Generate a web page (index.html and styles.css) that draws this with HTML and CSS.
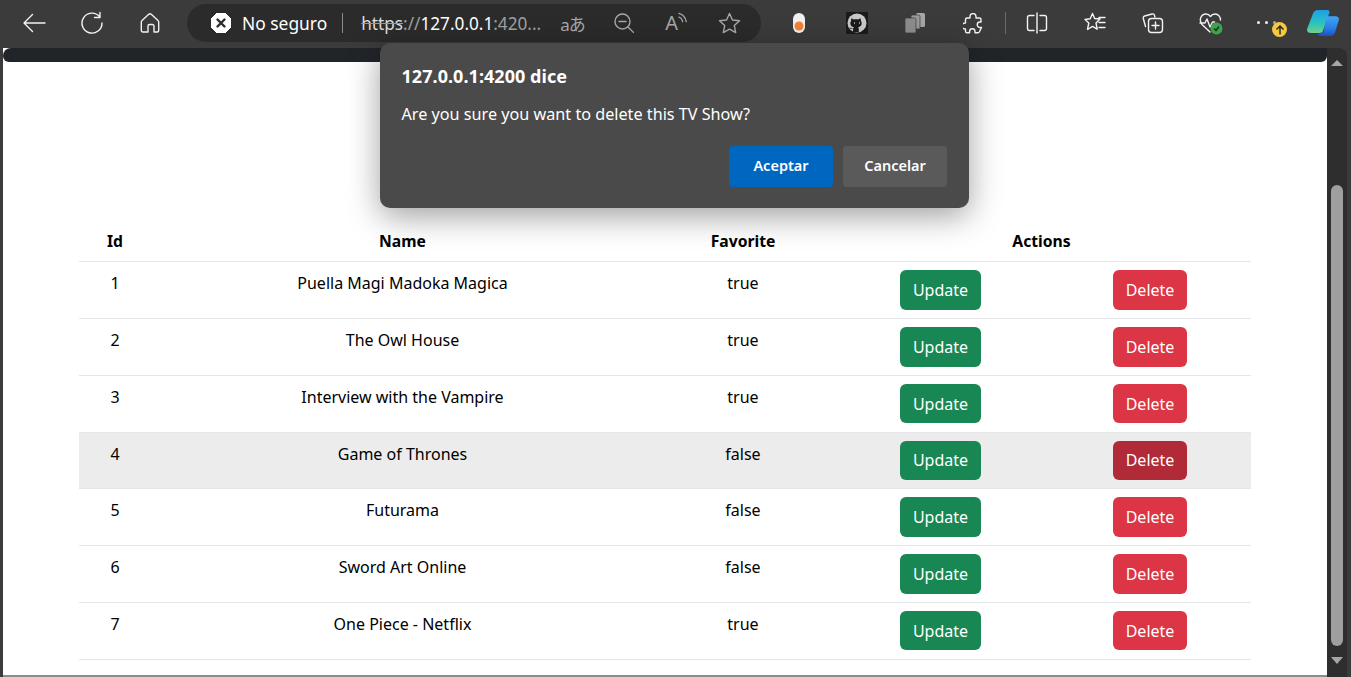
FILE: index.html
```html
<!DOCTYPE html>
<html>
  <head>
    <meta charset="utf-8" />
    <title>TV Shows</title>
    <link rel="stylesheet" href="styles.css">
  </head>
  <body>
    <div class="browser">
      <div class="toolbar">
        <div class="nav-icons">
          <span class="slot">
            <svg width="24" height="20" viewBox="0 0 24 20" class="ico"><path d="M23 10H2M10.500 1.500 2 10l8.500 8.500"/></svg>
          </span>
          <span class="slot">
            <svg width="24" height="24" viewBox="0 0 24 24" class="ico"><path d="M19.500 5.500A10 10 0 1 0 22 12M20 1.500v5h-5.500"/></svg>
          </span>
          <span class="slot">
            <svg width="22" height="22" viewBox="0 0 22 22" class="ico"><path d="M3 8.500 9.500 2.500a2.200 2.200 0 0 1 3 0L19 8.500a2 2 0 0 1 .7 1.500v8.500a1.500 1.500 0 0 1-1.500 1.500h-3.200v-6a1.500 1.500 0 0 0-1.500-1.500h-3a1.500 1.500 0 0 0-1.500 1.500v6H3.800a1.500 1.500 0 0 1-1.500-1.500V10A2 2 0 0 1 3 8.500z"/></svg>
          </span>
        </div>

        <div class="address">
          <svg width="20" height="20" viewBox="0 0 20 20" class="shield">
            <path d="M6 0h8l6 6v8l-6 6H6l-6-6V6z" fill="#fff" stroke="#fff" stroke-linejoin="round"/>
            <path d="M6.500 6.500l7 7M13.500 6.500l-7 7" stroke="#2b2b2b" stroke-width="2.400" stroke-linecap="round"/>
          </svg>
          <span class="no-secure">No seguro</span>
          <span class="addr-sep"></span>
          <span class="url"><s>https</s><span class="dim">://</span>127.0.0.1<span class="dim">:420...</span></span>
          <span class="addr-tools">
            <span class="translate">aあ</span>
            <svg width="20" height="20" viewBox="0 0 20 20" class="ico dimmed"><circle cx="8.500" cy="8.500" r="7.500"/><path d="M5 8.500h7M14 14l5.500 5.500"/></svg>
            <span class="read-aloud">A<svg width="10" height="12" viewBox="0 0 10 12" class="ico dimmed"><path d="M1 1c4 1 7 4 8 9M1 5c2 .5 3.500 2 4 5"/></svg></span>
            <svg width="23" height="22" viewBox="0 0 23 22" class="ico dimmed"><path d="M11.500 1.500l3 6.500 7 .8-5.200 4.800 1.400 7-6.200-3.500-6.200 3.500 1.400-7L1.500 8.800l7-.8z"/></svg>
          </span>
        </div>

        <div class="ext-icons">
          <span class="slot">
            <svg width="14" height="20" viewBox="0 0 14 20"><rect x="1" y="0" width="12" height="20" rx="6" fill="#f1f1f1"/><circle cx="7" cy="13" r="4.500" fill="#f58233"/></svg>
          </span>
          <span class="slot">
            <svg width="22" height="22" viewBox="0 0 22 22">
              <rect width="22" height="22" fill="#1b1b1b"/>
              <circle cx="11" cy="11" r="9.500" fill="#c9c9c9"/>
              <path d="M7 20v-3c-2 .4-3-.4-3.600-1.800 1 .4 1.800 1 2.600 1.400.5.300 1 .2 1.300-.1.100-.5.300-.9.600-1.200-2.200-.4-3.600-1.500-3.600-4 0-1 .3-1.800.9-2.400-.2-.6-.2-1.500.1-2.300.9 0 1.800.5 2.500 1 .8-.2 1.500-.3 2.200-.3s1.400.1 2.200.3c.7-.5 1.600-1 2.500-1 .3.800.3 1.700.1 2.300.6.600.9 1.400.9 2.400 0 2.500-1.400 3.600-3.600 4 .4.400.7 1 .7 1.800V20z" fill="#1b1b1b"/>
              <path d="M9 10l-1 1 1 1M13 10l1 1-1 1" fill="none" stroke="#c9c9c9" stroke-width=".7"/>
            </svg>
          </span>
          <span class="slot">
            <svg width="20" height="20" viewBox="0 0 20 20" fill="#8c8c8c">
              <rect x="11" y="0" width="9" height="14" rx="1.500" fill="#a6a6a6"/>
              <rect x="6" y="2" width="9" height="14" rx="1.500" fill="#9a9a9a" stroke="#3b3b3b" stroke-width=".7"/>
              <rect x="0" y="5" width="11" height="15" rx="1.500" stroke="#3b3b3b" stroke-width=".7"/>
            </svg>
          </span>
          <span class="slot">
            <svg width="20" height="21" viewBox="0 0 20 21" class="ico"><path d="M7 3.500a3 3 0 0 1 6 0V5h3.500a1.500 1.500 0 0 1 1.500 1.500V9h-1a2.700 2.700 0 0 0 0 5.500h1.500l-2.200 4.500a1.500 1.500 0 0 1-1.300.8H12v-1.300a2.700 2.700 0 0 0-5.400 0v1.300H4a1.500 1.500 0 0 1-1.500-1.500V16H2a3 3 0 0 1 0-6h.5V6.500A1.500 1.500 0 0 1 4 5h3z"/></svg>
          </span>
          <span class="tool-sep"></span>
          <span class="slot">
            <svg width="22" height="22" viewBox="0 0 22 22" class="ico"><path d="M8 3.500H3.500a2 2 0 0 0-2 2v11a2 2 0 0 0 2 2H8M14 3.500h4.500a2 2 0 0 1 2 2v11a2 2 0 0 1-2 2H14M11 1v20"/></svg>
          </span>
          <span class="slot">
            <svg width="22" height="22" viewBox="0 0 22 22" class="ico"><path d="M8.500 1.500l2.200 5h-.2L16 7l-4 4 1.200 6.200-4.700-2.800-5 3.100L4.800 11 1 7.500l5.200-.8zM15 5.500h6M15 10.500h6M15 15.500h6"/></svg>
          </span>
          <span class="slot">
            <svg width="22" height="22" viewBox="0 0 22 22" class="ico"><path d="M3.500 14.500 1.300 6.500A2 2 0 0 1 2.700 4L10 2a2 2 0 0 1 2.500 1.400l.4 1.600"/><rect x="6.500" y="6.500" width="14" height="14" rx="3"/><path d="M13.500 10v7M10 13.500h7"/></svg>
          </span>
          <span class="slot">
            <svg width="24" height="24" viewBox="0 0 24 24">
              <path class="ico-line" d="M11 21 3 13.500C-.5 9 2 3 7 3c2 0 3.500 1 4.500 2.500C12.500 4 14 3 16 3c3.500 0 5.500 3 5.500 6"/>
              <path class="ico-line" d="M1 12h5l2-4 3 8 2.500-5h2"/>
              <circle cx="17.500" cy="17.500" r="6" fill="#3fa34d"/>
              <path d="M15 17.500l2 2 3-4" fill="none" stroke="#16391c" stroke-width="1.500"/>
            </svg>
          </span>
          <span class="slot">
            <span class="dots"><i></i><i></i><i class="faint"></i></span>
            <span class="update-badge">
              <svg width="10" height="10" viewBox="0 0 10 10"><path d="M5 9.500V1M1.500 4.500 5 1l3.500 3.500" fill="none" stroke="#2b2b2b" stroke-width="1.500"/></svg>
            </span>
          </span>
          <span class="copilot">
            <svg width="33" height="28" viewBox="0 0 33 31" preserveAspectRatio="none">
              <defs>
                <linearGradient id="copA" x1="0" y1="0" x2="0" y2="1"><stop offset="0" stop-color="#1f9ee8"/><stop offset=".55" stop-color="#27c2c0"/><stop offset="1" stop-color="#6fd08a"/></linearGradient>
                <linearGradient id="copB" x1="0" y1="0" x2="0" y2="1"><stop offset="0" stop-color="#3fa6f5"/><stop offset=".6" stop-color="#2a7fe8"/><stop offset="1" stop-color="#1b4fc4"/></linearGradient>
              </defs>
              <path d="M11 1h9c2 0 3 1.500 2.500 3L16 24c-.5 1.500-2 2.500-3.500 2.500H4c-3 0-4.500-2-3.800-4.500L6 5c.8-2.500 2.500-4 5-4z" fill="url(#copA)"/>
              <path d="M20 8h8c3 0 4.500 2 3.800 4.500L28 26c-.8 2.500-2.500 4-5 4H13c-1.500 0-2.500-1-2-2.500 3 0 5-1 6-4l2-13c.2-1.500.5-2.500 1-2.500z" fill="url(#copB)"/>
            </svg>
          </span>
        </div>
      </div>

      <div class="viewport">
        <div class="page">
          <div class="navbar"></div>
          <div class="content">
            <table class="shows">
              <colgroup>
                <col class="col-id">
                <col class="col-name">
                <col class="col-fav">
                <col class="col-update">
                <col>
              </colgroup>
              <thead>
                <tr>
                  <th>Id</th>
                  <th>Name</th>
                  <th>Favorite</th>
                  <th colspan="2">Actions</th>
                </tr>
              </thead>
              <tbody>
                <tr>
                  <td>1</td><td>Puella Magi Madoka Magica</td><td>true</td>
                  <td><button class="btn green">Update</button></td>
                  <td><button class="btn red">Delete</button></td>
                </tr>
                <tr>
                  <td>2</td><td>The Owl House</td><td>true</td>
                  <td><button class="btn green">Update</button></td>
                  <td><button class="btn red">Delete</button></td>
                </tr>
                <tr>
                  <td>3</td><td>Interview with the Vampire</td><td>true</td>
                  <td><button class="btn green">Update</button></td>
                  <td><button class="btn red">Delete</button></td>
                </tr>
                <tr class="hovered">
                  <td>4</td><td>Game of Thrones</td><td>false</td>
                  <td><button class="btn green">Update</button></td>
                  <td><button class="btn red active">Delete</button></td>
                </tr>
                <tr>
                  <td>5</td><td>Futurama</td><td>false</td>
                  <td><button class="btn green">Update</button></td>
                  <td><button class="btn red">Delete</button></td>
                </tr>
                <tr>
                  <td>6</td><td>Sword Art Online</td><td>false</td>
                  <td><button class="btn green">Update</button></td>
                  <td><button class="btn red">Delete</button></td>
                </tr>
                <tr>
                  <td>7</td><td>One Piece - Netflix</td><td>true</td>
                  <td><button class="btn green">Update</button></td>
                  <td><button class="btn red">Delete</button></td>
                </tr>
              </tbody>
            </table>
          </div>
        </div>
        <div class="scrollbar">
          <span class="arrow up"></span>
          <span class="thumb"></span>
          <span class="arrow down"></span>
        </div>
      </div>

      <div class="dialog">
        <div class="dialog-title">127.0.0.1:4200 dice</div>
        <div class="dialog-msg">Are you sure you want to delete this TV Show?</div>
        <div class="dialog-btns">
          <button class="dlg-btn primary">Aceptar</button>
          <button class="dlg-btn">Cancelar</button>
        </div>
      </div>
    </div>
  </body>
</html>
```

FILE: styles.css
```css
* {
  box-sizing: border-box;
}
html,
body {
  margin: 0;
  padding: 0;
  height: 100%;
  overflow: hidden;
}
body {
  font-family: "Noto Sans", "Open Sans", sans-serif;
  background-color: #3b3b3b;
}
.browser {
  position: relative;
  display: flex;
  flex-direction: column;
  height: 677px;
  background-color: #3b3b3b;
}

/* toolbar */
.toolbar {
  display: flex;
  align-items: flex-start;
  height: 48px;
  padding: 4px 0 0 5px;
  color: #fff;
}
.nav-icons,
.ext-icons {
  display: flex;
  align-items: center;
  height: 38px;
}
.slot {
  position: relative;
  display: flex;
  align-items: center;
  justify-content: center;
  width: 58px;
  height: 38px;
}
.ico,
.ico-line {
  fill: none;
  stroke: #f2f2f2;
  stroke-width: 1.4;
  stroke-linecap: round;
  stroke-linejoin: round;
}
.dimmed {
  stroke: #a8a8a8;
}
.address {
  display: flex;
  align-items: center;
  width: 574px;
  height: 38px;
  margin-left: 8px;
  padding-left: 24px;
  border-radius: 19px;
  background-color: #2b2b2b;
}
.no-secure {
  margin-left: 11px;
  font-size: 17.4px;
}
.addr-sep {
  width: 1px;
  height: 20px;
  margin: 0 18px 0 15px;
  background-color: #8a8a8a;
}
.url {
  width: 180px;
  font-size: 17.2px;
  white-space: nowrap;
}
.url s {
  color: #dedede;
  text-decoration-color: #9a9a9a;
}
.dim {
  color: #a0a0a0;
}
.addr-tools {
  display: flex;
  align-items: center;
  gap: 31px;
  margin-left: 19px;
  color: #a8a8a8;
}
.translate {
  width: 23px;
  font-family: "Noto Sans", "Noto Sans CJK JP", sans-serif;
  font-size: 17px;
  letter-spacing: -1px;
  white-space: nowrap;
}
.read-aloud {
  display: flex;
  align-items: flex-start;
  width: 22px;
  font-size: 20px;
  line-height: 22px;
}
.ext-icons {
  margin-left: 9px;
}
.tool-sep {
  width: 1px;
  height: 22px;
  margin: 0 2px 0 3px;
  background-color: #6a6a6a;
}
.dots {
  display: flex;
  gap: 5px;
  margin-right: 6px;
  margin-top: -2px;
}
.dots i {
  width: 3px;
  height: 3px;
  border-radius: 50%;
  background-color: #f2f2f2;
}
.dots i.faint {
  opacity: 0.6;
}
.update-badge {
  position: absolute;
  left: 32px;
  top: 18px;
  display: flex;
  align-items: center;
  justify-content: center;
  width: 15px;
  height: 15px;
  border-radius: 50%;
  background-color: #f5c842;
}
.copilot {
  display: flex;
  align-items: center;
  justify-content: center;
  width: 50px;
  height: 38px;
}

/* page area */
.viewport {
  display: flex;
  flex: 1;
  min-height: 0;
  margin: 0 4px 0 3px;
}
.page {
  flex: 1;
  height: 627px;
  background-color: #fff;
  box-shadow: 0 2px 0 #8c8c8c;
}
.navbar {
  height: 14px;
  background-color: #212529;
  border-radius: 8px 0 6px 6px;
}
.content {
  padding: 159.8px 76px 0;
}
.shows {
  width: 100%;
  table-layout: fixed;
  border-collapse: collapse;
  font-size: 16px;
  color: #000;
}
.shows th,
.shows td {
  text-align: center;
  border-bottom: 1px solid #e4e6e8;
}
.shows th {
  height: 40px;
  padding: 6px 8px 8px;
  font-size: 15.7px;
  font-weight: 700;
}
.shows td {
  height: 56.75px;
  padding: 8px;
  vertical-align: top;
  line-height: 26px;
}
.hovered td {
  background-color: #ececec;
}
.col-id {
  width: 72px;
}
.col-name {
  width: 503px;
}
.col-fav {
  width: 178px;
}
.col-update {
  width: 217px;
}
.btn {
  height: 39.6px;
  padding: 0 12.8px;
  border: 0;
  border-radius: 6px;
  font-family: inherit;
  font-size: 16px;
  color: #fff;
}
.green {
  background-color: #198754;
}
.red {
  background-color: #dc3545;
}
.red.active {
  background-color: #b02a37;
}

/* scrollbar */
.scrollbar {
  display: flex;
  flex-direction: column;
  align-items: center;
  width: 20px;
  padding-top: 12px;
  background-color: #2e2e2e;
  border-radius: 0 8px 0 0;
}
.arrow {
  width: 0;
  height: 0;
  border-left: 6.5px solid transparent;
  border-right: 6.5px solid transparent;
}
.arrow.up {
  border-bottom: 6px solid #a6a6a6;
}
.arrow.down {
  margin-top: 11px;
  border-top: 7px solid #a6a6a6;
}
.thumb {
  width: 12px;
  height: 461px;
  margin-top: 119px;
  border-radius: 6px;
  background-color: #9f9f9f;
}

/* alert box */
.dialog {
  position: absolute;
  left: 380px;
  top: 43px;
  width: 589px;
  height: 165px;
  padding: 21px 22px 0 21.5px;
  border-radius: 10px;
  background-color: #4a4a4a;
  color: #fff;
  box-shadow: 0 8px 32px rgba(0, 0, 0, 0.38);
}
.dialog-title {
  font-size: 18px;
  font-weight: 700;
  letter-spacing: 0.05px;
  line-height: 24px;
}
.dialog-msg {
  margin-top: 14px;
  font-size: 16.2px;
  line-height: 24px;
}
.dialog-btns {
  display: flex;
  justify-content: flex-end;
  gap: 10px;
  margin-top: 20px;
}
.dlg-btn {
  width: 104px;
  height: 41px;
  padding-bottom: 5px;
  border: 0;
  border-radius: 4px;
  background-color: #5a5a5a;
  font-family: inherit;
  font-size: 14.5px;
  font-weight: 600;
  color: #fff;
}
.dlg-btn.primary {
  background-color: #0067c0;
}
```
